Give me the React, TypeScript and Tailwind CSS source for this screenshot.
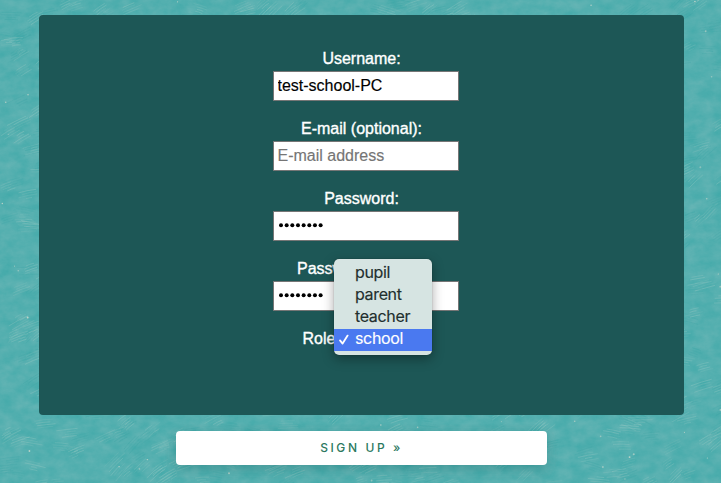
import React from "react";

function seeded(seed: number) {
  let s = seed;
  return () => {
    s = (s * 16807) % 2147483647;
    return s / 2147483647;
  };
}

function Texture() {
  const rnd = seeded(4217);
  const strokes: React.ReactNode[] = [];
  for (let i = 0; i < 950; i++) {
    const x = rnd() * 721;
    const y = rnd() * 483;
    const angle = -Math.abs(Math.sin(x / 60 + y / 80)) * 50 + rnd() * 30;
    const light = rnd() > 0.4;
    for (let j = 0; j < 4; j++) {
      const len = 6 + rnd() * 16;
      strokes.push(
        <path
          key={`${i}-${j}`}
          d={`M${-len / 2 + rnd() * 5} ${j * 2.4}q${len / 2} ${-rnd()} ${len} 0`}
          transform={`translate(${x} ${y}) rotate(${angle})`}
          stroke={light ? "#a3cdc7" : "#38a2a3"}
          strokeOpacity={0.1 + rnd() * 0.26}
          strokeWidth={0.9}
          fill="none"
        />
      );
    }
  }
  const flecks: React.ReactNode[] = [];
  for (let i = 0; i < 170; i++) {
    flecks.push(
      <circle key={i} cx={rnd() * 721} cy={rnd() * 483} r={0.5 + rnd() * 0.5} fill="#d8ddd0" opacity={0.4 + rnd() * 0.5} />
    );
  }
  return (
    <svg className="absolute inset-0" width="721" height="483" aria-hidden="true">
      <defs>
        <filter id="grain" x="0" y="0" width="100%" height="100%" colorInterpolationFilters="sRGB">
          <feTurbulence type="fractalNoise" baseFrequency="0.07 0.1" numOctaves="5" seed="8" />
          <feColorMatrix values="0.16 0 0 0 0.25  0.05 0 0 0 0.662  0.05 0 0 0 0.662  0 0 0 0 1" />
        </filter>
      </defs>
      <rect width="721" height="483" fill="#56b0b0" />
      <rect width="721" height="483" filter="url(#grain)" />
      {strokes}
      {flecks}
    </svg>
  );
}

const inputClass =
  "block ml-[9px] h-[30px] w-[186px] border border-[#767676] bg-white pl-[3.5px] text-base leading-[28px] text-black placeholder:text-[#757575] outline-none [-webkit-text-stroke:0.15px_currentColor]";

function Field({ label, type = "text", value, placeholder }: { label: string; type?: string; value?: string; placeholder?: string }) {
  return (
    <label className="flex h-[70px] flex-col items-center">
      <span className="h-[26px] leading-[28px] [-webkit-text-stroke:0.35px_white]">{label}</span>
      {type === "password" ? (
        <span className={inputClass}>
          <svg className="block" width="50" height="28" viewBox="0 0 50 28">
            {Array.from({ length: 8 }, (_, i) => (
              <circle key={i} cx={3 + i * 5.66} cy="13.2" r="2" fill="black" />
            ))}
          </svg>
        </span>
      ) : (
        <input className={inputClass} type={type} defaultValue={value} placeholder={placeholder} />
      )}
    </label>
  );
}

function RoleMenu() {
  return (
    <ul className="absolute left-[31px] top-[-65px] w-[98px] rounded-[5px] bg-[#d6e4e2] py-[4px] font-[Inter,sans-serif] text-base tracking-[-0.35px] text-[#222f2e] shadow-[0_4px_12px_rgba(0,0,0,0.35),0_0_1px_rgba(0,0,0,0.5)] [-webkit-text-stroke:0.15px_currentColor]">
      {["pupil", "parent", "teacher", "school"].map((role) => (
        <li
          key={role}
          className={
            role === "school"
              ? "relative h-[22px] bg-[#4a79f0] pl-[21px] leading-[19px] text-white"
              : "relative h-[22px] pl-[21px] leading-[19px]"
          }
        >
          {role === "school" && (
            <svg className="absolute left-[5px] top-[5px]" width="11" height="12" viewBox="0 0 11 12" fill="none">
              <path d="M1 6.4 3.6 9.6 8.6 1.6" stroke="white" strokeWidth="1.8" strokeLinecap="round" strokeLinejoin="round" />
            </svg>
          )}
          {role}
        </li>
      ))}
    </ul>
  );
}

export default function App() {
  return (
    <main className="relative h-[483px] w-[721px] overflow-hidden font-['Liberation_Sans',Arial,sans-serif]">
      <Texture />
      <form className="relative ml-[39px] flex w-[645px] flex-col pt-[15px]">
        <section className="h-[400px] rounded-[4px] bg-[#1d5756] pt-[30px] text-base text-white">
          <Field label="Username:" value="test-school-PC" />
          <Field label="E-mail (optional):" placeholder="E-mail address" />
          <Field label="Password:" type="password" />
          <Field label="Password (again):" type="password" />
          <div className="relative ml-[263.5px] -mt-px h-[26px] w-[130px] leading-[30px]">
            <span className="[-webkit-text-stroke:0.35px_white]">Role:</span>
            <div className="absolute left-[0.5px] top-0">
              <RoleMenu />
            </div>
          </div>
        </section>
        <button
          type="button"
          className="ml-[137px] mt-[16px] h-[34px] w-[371px] rounded-[4px] bg-white font-[Inter,sans-serif] text-[12px] font-medium tracking-[2.6px] text-[#2c795f] shadow-[0_4px_12px_rgba(0,60,60,0.2)]"
        >
          SIGN UP »
        </button>
      </form>
    </main>
  );
}
